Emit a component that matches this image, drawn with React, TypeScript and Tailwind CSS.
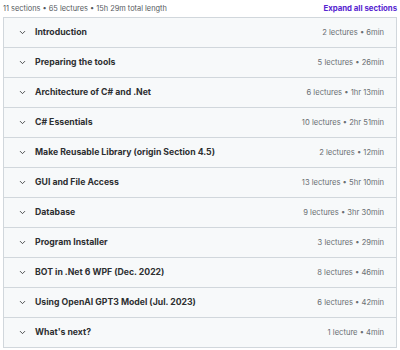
import React from 'react';
import { ChevronDown } from 'lucide-react';

interface Section {
  title: string;
  lectures: number;
  length: string;
}

const sections: Section[] = [
  { title: 'Introduction', lectures: 2, length: '6min' },
  { title: 'Preparing the tools', lectures: 5, length: '26min' },
  { title: 'Architecture of C# and .Net', lectures: 6, length: '1hr 13min' },
  { title: 'C# Essentials', lectures: 10, length: '2hr 51min' },
  { title: 'Make Reusable Library (origin Section 4.5)', lectures: 2, length: '12min' },
  { title: 'GUI and File Access', lectures: 13, length: '5hr 10min' },
  { title: 'Database', lectures: 9, length: '3hr 30min' },
  { title: 'Program Installer', lectures: 3, length: '29min' },
  { title: 'BOT in .Net 6 WPF (Dec. 2022)', lectures: 8, length: '46min' },
  { title: 'Using OpenAI GPT3 Model (Jul. 2023)', lectures: 6, length: '42min' },
  { title: "What's next?", lectures: 1, length: '4min' },
];

const App: React.FC = () => {
  return (
    <div className="w-[400px] h-[350px] bg-white overflow-hidden font-['Inter',sans-serif] text-[#2d2f31]">
      <div className="flex items-center justify-between pl-[3px] pr-[3px] h-[17px]">
        <span className="text-[7.4px] text-[#55595d]">11 sections • 65 lectures • 15h 29m total length</span>
        <span className="text-[7.8px] font-bold text-[#5624d0]">Expand all sections</span>
      </div>
      <div className="ml-[3px] mr-[3px] border border-b-0 border-[#d1d7dc]">
        {sections.map((s) => (
          <div
            key={s.title}
            className="flex items-center h-[30px] bg-[#f7f9fa] border-b border-[#d1d7dc] pl-[14px] pr-[12px]"
          >
            <ChevronDown className="w-[9px] h-[9px] text-[#2d2f31]" strokeWidth={2.2} />
            <span className="ml-[8px] flex-1 text-[8.7px] font-bold text-[#2d2f31]">{s.title}</span>
            <span className="text-[7.6px] text-[#6a6f73]">
              {s.lectures} {s.lectures === 1 ? 'lecture' : 'lectures'} • {s.length}
            </span>
          </div>
        ))}
      </div>
    </div>
  );
};

export default App;
